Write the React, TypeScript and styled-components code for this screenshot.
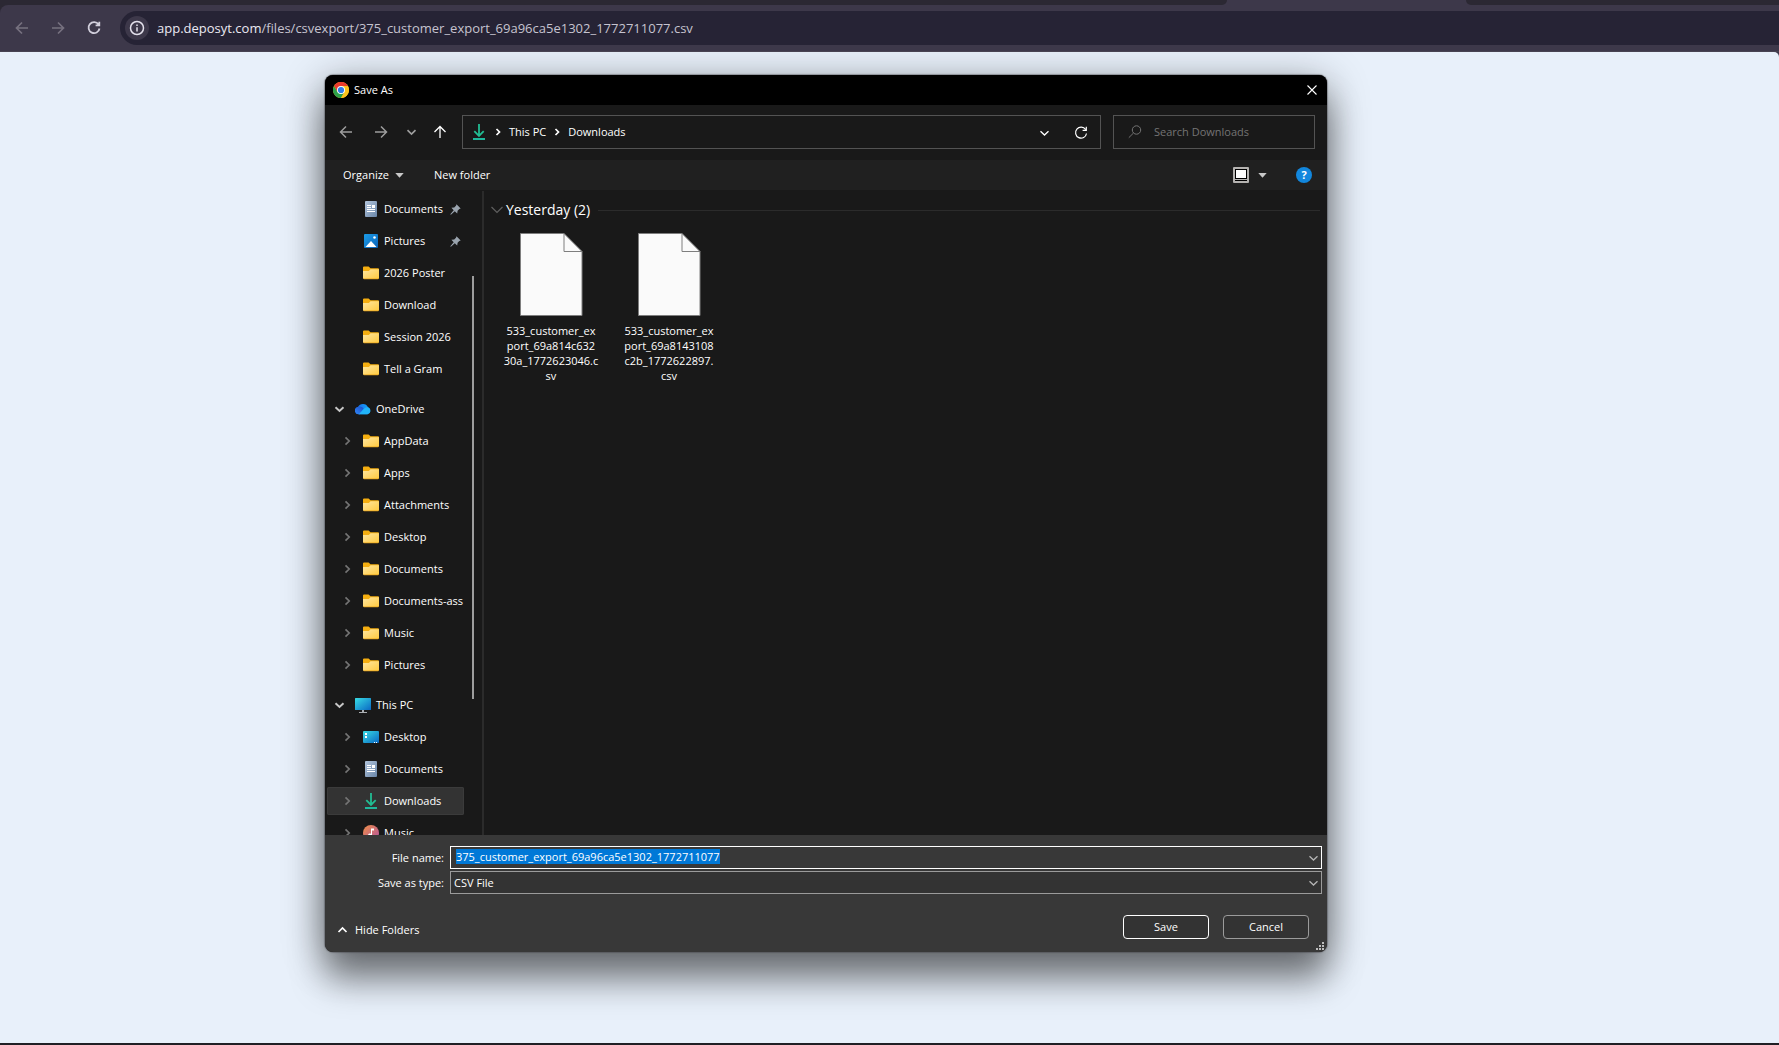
import React, { useEffect, useRef } from "react";
import styled, { createGlobalStyle, css } from "styled-components";

const GlobalStyle = createGlobalStyle`
  * { box-sizing: border-box; }
  body {
    margin: 0;
    background: #201f24;
    font-family: "Open Sans", "Noto Sans", sans-serif;
    font-size: 11px;
    line-height: 16px;
    color: #fff;
  }
  button, input, select {
    font: inherit;
    color: inherit;
    margin: 0;
    padding: 0;
    border: 0;
    background: none;
    outline: none;
  }
  svg { display: block; flex: none; }
`;

/* ---------- browser chrome ---------- */

const Window = styled.div`
  height: 100vh;
  display: flex;
  flex-direction: column;
  padding-bottom: 2px;
`;

const TabStrip = styled.div`
  flex: none;
  height: 5px;
  display: grid;
  grid-template-columns: 1227fr 239fr 313fr;
  background: #3d384a;
`;

const TabGap = styled.div<{ $side: "left" | "right" }>`
  background: #2b2833;
  border-radius: ${(p) => (p.$side === "left" ? "0 0 8px 0" : "0 0 0 8px")};
`;

const ToolbarBack = styled.div`
  flex: none;
  background: #2b2833;
`;

const Toolbar = styled.div`
  height: 47px;
  display: flex;
  align-items: center;
  padding: 0 0 1px 10px;
  background: #3d384a;
  border-radius: 8px 0 0 0;
  border-bottom: 1px solid #484352;
`;

const ToolButton = styled.button<{ $dim?: boolean }>`
  width: 24px;
  height: 24px;
  margin-right: 12px;
  display: grid;
  place-items: center;
  color: ${(p) => (p.$dim ? "#76717f" : "#d2cfdc")};
`;

const Omnibox = styled.div`
  flex: 1;
  height: 34px;
  margin-left: 2px;
  padding-left: 5px;
  display: flex;
  align-items: center;
  gap: 8px;
  background: #262335;
  border-radius: 17px 0 0 17px;
`;

const InfoButton = styled.button`
  width: 24px;
  height: 24px;
  border-radius: 12px;
  display: grid;
  place-items: center;
  background: #3d384a;
  color: #e4e1ec;
`;

const Url = styled.div`
  font-size: 13px;
  line-height: 20px;
  color: #c6c3d0;
`;

const Host = styled.span`
  color: #ebe9f2;
`;

const Viewport = styled.main`
  flex: 1;
  min-height: 0;
  display: grid;
  grid-template-columns: 325fr 1002fr 452fr;
  padding: 23px 0 91px;
  overflow: hidden;
  background: #e8f0fa;
  border-radius: 0 5px 0 0;
`;

const PageBack = styled.div`
  flex: 1;
  min-height: 0;
  display: flex;
  flex-direction: column;
  background: #3d384a;
`;

/* ---------- dialog ---------- */

const Dialog = styled.section`
  grid-column: 2;
  min-width: 0;
  min-height: 0;
  display: flex;
  flex-direction: column;
  overflow: hidden;
  background: #191919;
  border-radius: 8px;
  box-shadow: 0 0 1px 1px rgba(60, 60, 66, 0.4), 0 30px 34px rgba(0, 0, 0, 0.36), 0 8px 40px rgba(0, 0, 0, 0.42);
`;

const TitleBar = styled.header`
  flex: none;
  height: 30px;
  display: flex;
  align-items: center;
  gap: 5px;
  padding: 0 10px 0 8px;
  background: #000;
`;

const Title = styled.h1`
  flex: 1;
  margin: 0;
  font-size: 11px;
  font-weight: 400;
`;

const IconButton = styled.button<{ $w?: number; $tone?: string }>`
  flex: none;
  width: ${(p) => p.$w ?? 16}px;
  height: 16px;
  display: grid;
  place-items: center;
  color: ${(p) => p.$tone ?? "#fff"};
`;

const NavBar = styled.nav`
  flex: none;
  height: 55px;
  display: grid;
  grid-template-columns: 112px minmax(0, 639fr) minmax(0, 202fr);
  column-gap: 12px;
  align-items: center;
  padding: 0 12px 1px 13px;
`;

const History = styled.div`
  display: grid;
  grid-template-columns: 35px 30px 29px 16px;
`;

const AddressBar = styled.div`
  height: 34px;
  display: flex;
  align-items: center;
  border: 1px solid #535353;
  padding: 0 11px 0 8px;
`;

const Crumbs = styled.div`
  flex: 1;
  display: flex;
  align-items: center;
`;

const Crumb = styled.button`
  line-height: 16px;
`;

const AddressTools = styled.div`
  display: flex;
  align-items: center;
  gap: 21px;
  padding-top: 2px;
`;

const SearchBox = styled.label`
  height: 34px;
  padding-left: 14px;
  display: flex;
  align-items: center;
  gap: 12px;
  border: 1px solid #535353;
  color: #747474;
`;

const SearchInput = styled.input`
  flex: 1;
  min-width: 0;
  &::placeholder { color: #747474; opacity: 1; }
`;

const CommandBar = styled.div`
  flex: none;
  height: 30px;
  display: flex;
  align-items: center;
  padding: 0 15px 0 18px;
  background: #202020;
`;

const Command = styled.button`
  display: flex;
  align-items: center;
  gap: 6px;
  margin-right: 30px;
`;

const Spacer = styled.div`
  flex: 1;
`;

const ViewButton = styled.button`
  display: flex;
  align-items: center;
  gap: 9px;
  margin-right: 29px;
`;

const HelpButton = styled.button`
  width: 16px;
  height: 16px;
  border-radius: 8px;
  background: #1287dd;
  font-size: 11px;
  font-weight: 700;
`;

const Body = styled.div`
  flex: 1;
  min-height: 0;
  display: flex;
  padding-top: 1px;
`;

const Sidebar = styled.aside`
  flex: none;
  width: 159px;
  display: flex;
  padding-left: 2px;
  overflow: hidden;
  border-right: 2px solid #2b2b2b;
`;

const Tree = styled.div`
  flex: none;
  width: 137px;
  padding-top: 4px;
  overflow: hidden;
`;

const TreeGroup = styled.ul`
  list-style: none;
  margin: 0;
  padding: 0 0 12px;
  display: grid;
  gap: 4px;
`;

const TreeRow = styled.li<{ $top?: boolean; $selected?: boolean }>`
  height: 28px;
  display: flex;
  align-items: center;
  padding-left: ${(p) => (p.$top ? 4 : 12)}px;
  color: ${(p) => (p.$top ? "#c8c8c8" : "#747474")};
  white-space: nowrap;
  overflow: hidden;
  ${(p) =>
    p.$selected &&
    css`
      background: #333;
      box-shadow: inset 0 0 0 1px #3b3b3b;
      border-radius: 2px;
    `}
`;

const Twisty = styled.span`
  flex: none;
  width: 16px;
  height: 16px;
  display: grid;
  place-items: center;
`;

const RowIcon = styled.span`
  flex: none;
  width: 16px;
  margin: 0 5px 0 8px;
`;

const RowLabel = styled.span`
  flex: 1;
  color: #fff;
`;

const PinSlot = styled.span`
  flex: none;
  width: 14px;
`;

const ScrollTrack = styled.div`
  flex: 1;
  display: flex;
  justify-content: center;
  padding: 85px 0 136px;
`;

const ScrollThumb = styled.div`
  width: 2px;
  background: #9d9d9d;
`;

const Files = styled.div`
  flex: 1;
  min-width: 0;
  padding: 9px 7px 0 7px;
`;

const GroupHeading = styled.h2`
  display: flex;
  align-items: center;
  margin: 0;
  font-size: 14px;
  font-weight: 400;
  line-height: 20px;
  color: #5f5f5f;
`;

const GroupTitle = styled.span`
  margin: 0 8px 0 3px;
  color: #fff;
`;

const Rule = styled.span`
  flex: 1;
  height: 1px;
  background: #2b2b2b;
`;

const FileGrid = styled.div`
  display: flex;
  gap: 18px;
  padding: 12px 0 0 10px;
`;

const FileItem = styled.button`
  width: 100px;
  display: flex;
  flex-direction: column;
  align-items: center;
  gap: 6px;
  line-height: 15px;
`;

const Footer = styled.footer`
  flex: none;
  height: 117px;
  display: flex;
  flex-direction: column;
  background: #383838;
  padding: 11px 5px 0;
`;

const Fields = styled.div`
  display: grid;
  grid-template-columns: 114px 1fr;
  column-gap: 6px;
  row-gap: 2px;
  align-items: center;
`;

const FieldLabel = styled.label`
  text-align: right;
`;

const Combo = styled.div<{ $focus?: boolean }>`
  height: 23px;
  display: flex;
  align-items: center;
  border: 1px solid ${(p) => (p.$focus ? "#fff" : "#9b9b9b")};
  background: ${(p) => (p.$focus ? "#383838" : "#333")};
  color: #b4b4b4;
`;

const NameInput = styled.input`
  flex: 1;
  min-width: 0;
  height: 17px;
  padding: 0 0 2px 5px;
  color: #fff;
  &::selection { background: #0078d7; color: #fff; }
`;

const TypeSelect = styled.select`
  flex: 1;
  appearance: none;
  padding-left: 3px;
  color: #fff;
  option { background: #333; }
`;

const Actions = styled.div`
  display: flex;
  align-items: center;
  gap: 14px;
  padding: 21px 13px 0 4px;
`;

const HideFolders = styled.button`
  display: flex;
  align-items: center;
  gap: 5px;
  padding-top: 6px;
`;

const PushButton = styled.button<{ $primary?: boolean }>`
  width: 86px;
  height: 24px;
  border: 1px solid ${(p) => (p.$primary ? "#fff" : "#9b9b9b")};
  border-radius: 4px;
  background: #333;
  padding-bottom: 1px;
`;

const GripRow = styled.div`
  display: flex;
  justify-content: flex-end;
  padding-top: 3px;
  margin-right: -2px;
`;

/* ---------- icons ---------- */

const Stroke = ({ d, w = 16, sw = 1.3, vb = 16 }: { d: string; w?: number; sw?: number; vb?: number }) => (
  <svg width={w} height={w} viewBox={`0 0 ${vb} ${vb}`} fill="none" stroke="currentColor" strokeWidth={sw}>
    <path d={d} />
  </svg>
);

const D = {
  left: "M14 8H2.5M8 2.5 2.5 8 8 13.5",
  right: "M2 8h11.500M8 2.500 13.500 8 8 13.500",
  up: "M8 14V2.500M2.500 8 8 2.500 13.500 8",
  down: "M4.500 6.200 8.500 10 12.500 6.200",
  chevR: "M6.500 4.300 10.200 8 6.500 11.700",
  chevUp: "M4.500 10 8.500 6 12.500 10",
  crumb: "M3.500 2 6.500 5 3.500 8",
};

const Reload = ({ sw = 1.3, size = 16 }: { sw?: number; size?: number }) => (
  <svg width={size} height={size} viewBox="0 0 16 16" fill="none" stroke="currentColor" strokeWidth={sw}>
    <path d="M12.600 4.500A5.500 5.500 0 1 0 13.500 8.500M13.300 1.800V5.300H9.600" />
  </svg>
);

const Caret = () => (
  <svg width="9" height="5" viewBox="0 0 9 5">
    <path d="M0.300 0h8.400L4.500 4.800z" fill="#c8c8c8" />
  </svg>
);

const ChromeIcon = () => (
  <svg width="16" height="16" viewBox="0 0 48 48">
    <circle cx="24" cy="24" r="24" fill="#fcc31e" />
    <path d="M24 12H44.800A24 24 0 0 0 3.200 12L13.600 30z" fill="#ea3a2d" />
    <path d="M3.200 12A24 24 0 0 0 24 48L34.400 30 24 24 13.600 30z" fill="#2da04a" />
    <path d="M44.800 12A24 24 0 0 1 24 48L34.400 30A12 12 0 0 0 24 12z" fill="#fcc31e" />
    <circle cx="24" cy="24" r="12" fill="#fff" />
    <circle cx="24" cy="24" r="9.300" fill="#2f7de9" />
  </svg>
);

const FolderIcon = () => (
  <svg width="16" height="16" viewBox="0 0 16 16">
    <defs>
      <linearGradient id="folder" x1="0" y1="0" x2="1" y2="1">
        <stop offset="0" stopColor="#ffe6a0" />
        <stop offset="1" stopColor="#ffca3f" />
      </linearGradient>
    </defs>
    <path d="M0 2.500Q0 1.500 1 1.500H5.600L7.500 3.200H15Q16 3.200 16 4.200V13H0z" fill="#f5ae10" />
    <path d="M0 6H5.800L7.600 4.300H16V13Q16 14 15 14H1Q0 14 0 13z" fill="url(#folder)" />
    <path d="M0.300 13.600Q0.500 14.300 1 14.300H15Q15.600 14.300 15.800 13.600z" fill="#e9a31b" />
  </svg>
);

const DocumentIcon = () => (
  <svg width="16" height="16" viewBox="0 0 16 16">
    <defs>
      <linearGradient id="doc" x1="0" y1="0" x2="1" y2="1">
        <stop offset="0" stopColor="#b4c6dc" />
        <stop offset="1" stopColor="#6885a8" />
      </linearGradient>
    </defs>
    <rect x="2" y="0" width="12" height="16" rx="1" fill="url(#doc)" />
    <path d="M4 4.500h4M4 6.500h4M4 8.500h8M4 10.500h8" stroke="#fff" strokeWidth="1" />
    <rect x="9" y="4" width="3" height="3" fill="#fff" />
  </svg>
);

const PicturesIcon = () => (
  <svg width="16" height="16" viewBox="0 0 16 16">
    <defs>
      <linearGradient id="pic" x1="0" y1="0" x2="1" y2="1">
        <stop offset="0" stopColor="#1b9de8" />
        <stop offset="1" stopColor="#0b62b8" />
      </linearGradient>
    </defs>
    <rect x="1" y="1" width="14" height="14" rx="1" fill="url(#pic)" />
    <path d="M2.500 14 8 8 13.500 14z" fill="#fff" />
    <circle cx="11.500" cy="4.500" r="1.300" fill="#fff" />
  </svg>
);

const CloudIcon = () => (
  <svg width="16" height="16" viewBox="0 0 16 16">
    <defs>
      <linearGradient id="cloudB" x1="0" y1="0" x2="1" y2="0">
        <stop offset="0" stopColor="#1668e8" />
        <stop offset="1" stopColor="#16a8fb" />
      </linearGradient>
      <linearGradient id="cloudL" x1="0" y1="1" x2="1" y2="0">
        <stop offset="0" stopColor="#2f86f6" />
        <stop offset="1" stopColor="#1d4fcb" />
      </linearGradient>
    </defs>
    <path d="M3.800 13.300A3.800 3.800 0 0 1 3 6 5.500 5.500 0 0 1 13 6.200 3.800 3.800 0 0 1 12.500 13.300z" fill="url(#cloudB)" />
    <path d="M3.800 13.300A3.800 3.800 0 0 1 3.500 5.700Q6.500 5 8.600 7.300L4.800 13.300z" fill="url(#cloudL)" />
    <path d="M3.800 13.300 9.500 7.200Q11.500 5.800 13.500 6.400A3.700 3.700 0 0 1 12.500 13.300z" fill="#21b4f9" />
  </svg>
);

const PcIcon = () => (
  <svg width="16" height="16" viewBox="0 0 16 16">
    <defs>
      <linearGradient id="pc" x1="0" y1="0" x2="1" y2="1">
        <stop offset="0" stopColor="#38dce4" />
        <stop offset="1" stopColor="#0a68c4" />
      </linearGradient>
    </defs>
    <rect x="0" y="1" width="16" height="12" rx="0.500" fill="url(#pc)" />
    <path d="M7 13h2v2h-2zM4 15h8v1H4z" fill="#a9adb1" />
  </svg>
);

const DesktopIcon = () => (
  <svg width="16" height="16" viewBox="0 0 16 16">
    <rect x="0" y="2" width="16" height="12" rx="1" fill="url(#pc)" />
    <path d="M2 4h2v2h-2zM2 7h2v2h-2zM11 13h1v1h-1zM13 13h1v1h-1z" fill="#fff" />
  </svg>
);

const DownloadIcon = () => (
  <svg width="16" height="16" viewBox="0 0 16 16" fill="none" strokeWidth="1.800">
    <path d="M8 0V12M3.300 7.200 8 11.900 12.700 7.200" stroke="#22bd93" />
    <path d="M2 15H14" stroke="#1fb79c" strokeWidth="2" />
  </svg>
);

const MusicIcon = () => (
  <svg width="16" height="16" viewBox="0 0 16 16">
    <defs>
      <linearGradient id="music" x1="0" y1="0" x2="1" y2="1">
        <stop offset="0" stopColor="#f09048" />
        <stop offset="1" stopColor="#b04fa0" />
      </linearGradient>
    </defs>
    <circle cx="8" cy="8" r="8" fill="url(#music)" />
    <path d="M8 3.500h3v2H9v5a2 2 0 1 1-1-1.700z" fill="#fff" />
  </svg>
);

const PinIcon = () => (
  <svg width="11" height="11" viewBox="0 0 11 11">
    <path d="M6.500 0.300 10.700 4.500 9.300 5 7.600 6.800 7.200 9.600 4.800 7.300 0.900 10.800 0.300 10.200 3.700 6.200 1.400 3.800 4.200 3.400 6 1.700z" fill="#9aa4ae" />
  </svg>
);

const FileIcon = () => (
  <svg width="64" height="85" viewBox="0 0 64 85">
    <path d="M1.500 1.500H45L63 19.500V83.500H1.500z" fill="#fafafa" stroke="#7e7e7e" />
    <path d="M45 1.500V19.500H63" fill="none" stroke="#7e7e7e" />
  </svg>
);

const ViewIcon = () => (
  <svg width="16" height="16" viewBox="0 0 16 16">
    <rect width="16" height="16" rx="1" fill="#b5b3b1" />
    <rect x="2" y="2" width="12" height="10" fill="#000" />
    <rect x="3" y="3" width="10" height="8" fill="#fff" />
    <rect x="2" y="13" width="12" height="1" fill="#000" />
  </svg>
);

const SearchIcon = () => (
  <svg width="14" height="14" viewBox="0 0 14 14" fill="none" stroke="currentColor">
    <circle cx="8.500" cy="5" r="4.200" />
    <path d="M5.500 8 0.800 12.700" />
  </svg>
);

const InfoIcon = () => (
  <svg width="16" height="16" viewBox="0 0 16 16" fill="none" stroke="currentColor" strokeWidth="1.500">
    <circle cx="8" cy="8" r="6.500" />
    <path d="M8 7.300V11.500M8 4.600V6.100" />
  </svg>
);

const GripIcon = () => (
  <svg width="8" height="8" viewBox="0 0 8 8" fill="#bdbdbd">
    <path d="M6 0h2v2H6zM3 3h2v2H3zM6 3h2v2H6zM0 6h2v2H0zM3 6h2v2H3zM6 6h2v2H6z" />
  </svg>
);

/* ---------- data ---------- */

type Node = { label: string; icon: React.ReactNode; pinned?: boolean; selected?: boolean };

const folder = (label: string): Node => ({ label, icon: <FolderIcon /> });

const quick: Node[] = [
  { label: "Documents", icon: <DocumentIcon />, pinned: true },
  { label: "Pictures", icon: <PicturesIcon />, pinned: true },
  ...["2026 Poster", "Download", "Session 2026", "Tell a Gram"].map(folder),
];

const oneDrive: Node[] = [
  "AppData", "Apps", "Attachments", "Desktop", "Documents", "Documents-ass", "Music", "Pictures",
].map(folder);

const thisPc: Node[] = [
  { label: "Desktop", icon: <DesktopIcon /> },
  { label: "Documents", icon: <DocumentIcon /> },
  { label: "Downloads", icon: <DownloadIcon />, selected: true },
  { label: "Music", icon: <MusicIcon /> },
];

const files = [
  ["533_customer_ex", "port_69a814c632", "30a_1772623046.c", "sv"],
  ["533_customer_ex", "port_69a8143108", "c2b_1772622897.", "csv"],
];

const Row = ({ node, expandable }: { node: Node; expandable?: boolean }) => (
  <TreeRow $selected={node.selected}>
    <Twisty>{expandable && <Stroke d={D.chevR} sw={1.7} />}</Twisty>
    <RowIcon>{node.icon}</RowIcon>
    <RowLabel>{node.label}</RowLabel>
    {node.pinned && <PinSlot><PinIcon /></PinSlot>}
  </TreeRow>
);

const Branch = ({ label, icon, items }: { label: string; icon: React.ReactNode; items: Node[] }) => (
  <TreeGroup>
    <TreeRow $top>
      <Twisty><Stroke d={D.down} sw={1.9} /></Twisty>
      <RowIcon>{icon}</RowIcon>
      <RowLabel>{label}</RowLabel>
    </TreeRow>
    {items.map((n) => <Row key={n.label} node={n} expandable />)}
  </TreeGroup>
);

export default function App() {
  const nameRef = useRef<HTMLInputElement>(null);
  useEffect(() => {
    nameRef.current?.focus();
    nameRef.current?.select();
  }, []);

  return (
    <Window>
      <GlobalStyle />
      <TabStrip>
        <TabGap $side="left" />
        <div />
        <TabGap $side="right" />
      </TabStrip>
      <ToolbarBack>
        <Toolbar>
          <ToolButton $dim aria-label="Back"><Stroke d={D.left} sw={1.7} /></ToolButton>
          <ToolButton $dim aria-label="Forward"><Stroke d={D.right} sw={1.7} /></ToolButton>
          <ToolButton aria-label="Reload"><Reload sw={1.8} /></ToolButton>
          <Omnibox>
            <InfoButton aria-label="View site information"><InfoIcon /></InfoButton>
            <Url><Host>app.deposyt.com</Host>/files/csvexport/375_customer_export_69a96ca5e1302_1772711077.csv</Url>
          </Omnibox>
        </Toolbar>
      </ToolbarBack>
      <PageBack>
        <Viewport>
          <Dialog role="dialog" aria-label="Save As">
            <TitleBar>
              <ChromeIcon />
              <Title>Save As</Title>
              <IconButton $w={10} aria-label="Close"><Stroke d="M0.500 0.500 9.500 9.500M9.500 0.500 0.500 9.500" w={10} vb={10} sw={1.1} /></IconButton>
            </TitleBar>
            <NavBar>
              <History>
                <IconButton $tone="#9d9d9d" aria-label="Back"><Stroke d={D.left} sw={1.5} /></IconButton>
                <IconButton $tone="#9d9d9d" aria-label="Forward"><Stroke d={D.right} sw={1.5} /></IconButton>
                <IconButton $tone="#9d9d9d" aria-label="Recent locations"><Stroke d={D.down} sw={1.7} /></IconButton>
                <IconButton aria-label="Up"><Stroke d={D.up} /></IconButton>
              </History>
              <AddressBar>
                <Crumbs>
                  <DownloadIcon />
                  <IconButton $w={22} aria-label="Expand"><Stroke d={D.crumb} w={10} vb={10} sw={1.7} /></IconButton>
                  <Crumb>This PC</Crumb>
                  <IconButton $w={22} aria-label="Expand This PC"><Stroke d={D.crumb} w={10} vb={10} sw={1.7} /></IconButton>
                  <Crumb>Downloads</Crumb>
                </Crumbs>
                <AddressTools>
                  <IconButton aria-label="Previous locations"><Stroke d={D.down} /></IconButton>
                  <IconButton aria-label="Refresh"><Reload sw={1.2} /></IconButton>
                </AddressTools>
              </AddressBar>
              <SearchBox>
                <SearchIcon />
                <SearchInput type="text" placeholder="Search Downloads" aria-label="Search Downloads" />
              </SearchBox>
            </NavBar>
            <CommandBar>
              <Command>Organize <Caret /></Command>
              <Command>New folder</Command>
              <Spacer />
              <ViewButton aria-label="Change your view"><ViewIcon /><Caret /></ViewButton>
              <HelpButton>?</HelpButton>
            </CommandBar>
            <Body>
              <Sidebar>
                <Tree>
                  <TreeGroup>{quick.map((n) => <Row key={n.label} node={n} />)}</TreeGroup>
                  <Branch label="OneDrive" icon={<CloudIcon />} items={oneDrive} />
                  <Branch label="This PC" icon={<PcIcon />} items={thisPc} />
                </Tree>
                <ScrollTrack><ScrollThumb /></ScrollTrack>
              </Sidebar>
              <Files>
                <GroupHeading>
                  <Stroke d="M0.500 3 6 8.500 11.500 3" w={12} vb={12} sw={1.2} />
                  <GroupTitle>Yesterday (2)</GroupTitle>
                  <Rule />
                </GroupHeading>
                <FileGrid>
                  {files.map((lines) => (
                    <FileItem key={lines.join("")}>
                      <FileIcon />
                      <span>
                        {lines.map((l, i) => <React.Fragment key={i}>{i > 0 && <br />}{l}</React.Fragment>)}
                      </span>
                    </FileItem>
                  ))}
                </FileGrid>
              </Files>
            </Body>
            <Footer>
              <Fields>
                <FieldLabel htmlFor="file-name">File name:</FieldLabel>
                <Combo $focus>
                  <NameInput id="file-name" ref={nameRef} type="text" spellCheck={false} defaultValue="375_customer_export_69a96ca5e1302_1772711077" />
                  <IconButton $tone="#b4b4b4" tabIndex={-1} aria-label="Previous names"><Stroke d={D.down} /></IconButton>
                </Combo>
                <FieldLabel htmlFor="file-type">Save as type:</FieldLabel>
                <Combo>
                  <TypeSelect id="file-type"><option>CSV File</option></TypeSelect>
                  <IconButton $tone="#b4b4b4" tabIndex={-1} aria-label="Show types"><Stroke d={D.down} /></IconButton>
                </Combo>
              </Fields>
              <Actions>
                <HideFolders><Stroke d={D.chevUp} sw={1.7} />Hide Folders</HideFolders>
                <Spacer />
                <PushButton $primary>Save</PushButton>
                <PushButton>Cancel</PushButton>
              </Actions>
              <GripRow><GripIcon /></GripRow>
            </Footer>
          </Dialog>
        </Viewport>
      </PageBack>
    </Window>
  );
}
